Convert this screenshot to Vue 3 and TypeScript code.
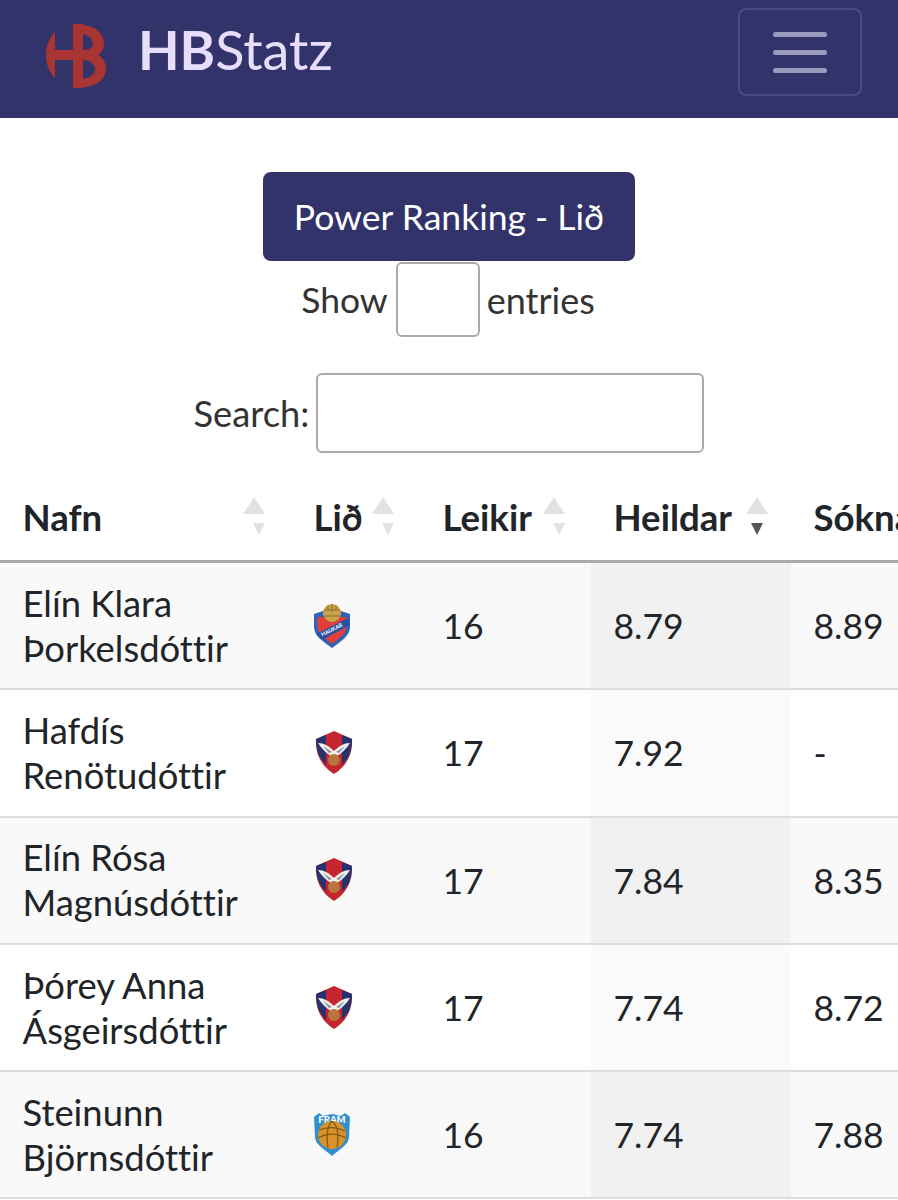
<script setup lang="ts">
type Team = 'haukar' | 'valur' | 'fram'
interface Row { first: string; last: string; team: Team; games: number; total: string; attack: string }
const columns = [
  { label: 'Nafn', key: 'nafn' },
  { label: 'Lið', key: 'lid' },
  { label: 'Leikir', key: 'leikir' },
  { label: 'Heildar', key: 'heildar', active: true },
  { label: 'Sóknarleikur', key: 'sokn', hidden: true },
]
const rows: Row[] = [
  { first: 'Elín Klara', last: 'Þorkelsdóttir', team: 'haukar', games: 16, total: '8.79', attack: '8.89' },
  { first: 'Hafdís', last: 'Renötudóttir', team: 'valur', games: 17, total: '7.92', attack: '-' },
  { first: 'Elín Rósa', last: 'Magnúsdóttir', team: 'valur', games: 17, total: '7.84', attack: '8.35' },
  { first: 'Þórey Anna', last: 'Ásgeirsdóttir', team: 'valur', games: 17, total: '7.74', attack: '8.72' },
  { first: 'Steinunn', last: 'Björnsdóttir', team: 'fram', games: 16, total: '7.74', attack: '7.88' },
]
</script>

<template>
  <div class="page">
    <header class="navbar">
      <a class="brand">
        <svg class="logo" width="60" height="64" viewBox="0 0 60 64">
          <path fill="#a83532" d="M9 8 C3 14 0 22 0 31 C0 40 3 48 9 54 L9 36 L27 36 L27 26 L9 26 Z" />
          <path fill="#a83532" d="M27 0 H37 V64 H27 Z" />
          <path fill="#a83532" d="M37 1 C50 2 58 10 58 20 C58 25 55 29 52 31 C56 33 60 38 60 45 C60 55 50 63 37 63 L37 55 C44 54 49 50 49 45 C49 40 44 36 37 36 L37 26 C42 26 47 24 47 20 C47 15 43 11 37 10 Z" />
        </svg>
        <span class="brand-text"><b>HB</b>Statz</span>
      </a>
      <button class="toggler" aria-label="Toggle navigation">
        <span></span><span></span><span></span>
      </button>
    </header>

    <main>
      <div class="actions"><button class="rank-btn">Power Ranking - Lið</button></div>
      <div class="length">
        <label class="show">Show</label>
        <span class="select"></span>
        <label>entries</label>
      </div>
      <div class="search">
        <label>Search:</label>
        <input type="text" />
      </div>

      <div class="table-wrap">
        <table>
          <colgroup>
            <col class="c1" />
            <col class="c2" />
            <col class="c3" />
            <col class="c4" />
            <col class="c5" />
          </colgroup>
          <thead>
            <tr>
              <th v-for="c in columns" :key="c.key">
                {{ c.label }}
                <span v-if="!c.hidden" class="sort" :class="'sort-' + c.key">
                  <i class="up"></i>
                  <i class="down" :class="{ dark: c.active }"></i>
                </span>
              </th>
            </tr>
          </thead>
          <tbody>
            <tr v-for="r in rows" :key="r.last">
              <td class="name">{{ r.first }}<br />{{ r.last }}</td>
              <td>
                <svg v-if="r.team === 'haukar'" class="crest" width="38" height="46" viewBox="0 0 38 46">
                  <path fill="#2f63b8" d="M1 11 L10 8 L28 8 L37 11 L37 24 C37 33 27 39 19 45 C11 39 1 33 1 24 Z" />
                  <path fill="#e23f3a" d="M4.5 14 L33.5 14 L33.5 24 C33.5 31 25 36 19 41 C13 36 4.5 31 4.5 24 Z" />
                  <path fill="#2b4fa0" d="M3 31 L35 15 L37 22 L9 37 Z" />
                  <text x="19" y="28.5" class="crest-text" transform="rotate(-27 19 27)">HAUKAR</text>
                  <circle cx="19" cy="10" r="9" fill="#c9a24a" />
                  <path d="M11 7 H27 M11 13 H27 M19 1 V9 M15 2 V7 M23 2 V7" stroke="#8b6d2a" stroke-width="1" fill="none" />
                </svg>
                <svg v-else-if="r.team === 'valur'" class="crest valur" width="38" height="44" viewBox="0 0 38 44">
                  <path fill="#c5252f" d="M19 0 L37 8 C38 22 32 35 19 43 C6 35 0 22 1 8 Z" />
                  <path fill="#26336f" d="M1 8 L11 4 L11 34 L4 25 C2 19 1 14 1 8 Z M37 8 L27 4 L27 34 L34 25 C36 19 37 14 37 8 Z" />
                  <path fill="#f1eeee" d="M3 12 C9 12 14 15 19 20 C24 15 29 12 35 12 C32 17 27 22 22 25 L16 25 C11 22 6 17 3 12 Z" />
                  <path fill="#8f8e96" d="M8 15 L17 21 L14 22 Z M30 15 L21 21 L24 22 Z" />
                  <circle cx="19" cy="29" r="6" fill="#b8743c" />
                </svg>
                <svg v-else class="crest" width="38" height="45" viewBox="0 0 38 45">
                  <path fill="#2f8fd0" d="M1 5 L6 1 L10 4 L19 2 L28 4 L32 1 L37 5 L36 25 C36 33 25 38 19 44 C13 38 2 33 2 25 Z" />
                  <text x="19" y="10.5" class="crest-name">FRAM</text>
                  <circle cx="19" cy="23" r="14" fill="#d8922b" />
                  <path d="M6 18 C14 15 24 15 32 19 M5 26 C14 21 24 21 33 26 M19 9 C14 14 13 22 15 36 M19 9 C25 14 26 22 24 36" stroke="#84560f" stroke-width="1.2" fill="none" />
                </svg>
              </td>
              <td>{{ r.games }}</td>
              <td class="sorted">{{ r.total }}</td>
              <td>{{ r.attack }}</td>
            </tr>
          </tbody>
        </table>
      </div>
    </main>
  </div>
</template>

<style>
html, body { margin: 0; background: #fff; }
</style>

<style scoped>
.page {
  width: 898px;
  height: 1200px;
  overflow: hidden;
  font-family: Lato, "Liberation Sans", sans-serif;
  font-size: 35.5px;
  font-variant-ligatures: none;
  color: #212529;
}
.navbar {
  height: 118px;
  background: #33336b;
  display: flex;
  align-items: center;
  justify-content: space-between;
  padding: 0 36px 14px 46px;
  box-sizing: border-box;
}
.brand { display: flex; align-items: center; gap: 32px; }
.logo { margin-top: 8px; }
.brand-text { font-size: 54px; color: #e8defc; line-height: 1; margin-bottom: 4px; }
.brand-text b { font-weight: 700; }
.toggler {
  width: 124px;
  height: 88px;
  background: transparent;
  border: 2px solid #4b4b81;
  border-radius: 8px;
  display: flex;
  flex-direction: column;
  align-items: center;
  justify-content: center;
  gap: 13px;
  padding: 0;
}
.toggler span { width: 54px; height: 5px; border-radius: 3px; background: #9a9abf; }
.actions { display: flex; justify-content: center; padding-top: 54px; }
.rank-btn {
  width: 372px;
  height: 89px;
  background: #33336b;
  color: #fff;
  border: 0;
  border-radius: 8px;
  font: inherit;
  font-variant-ligatures: none;
  padding: 0;
}
.length {
  display: flex;
  justify-content: center;
  align-items: center;
  height: 75px;
  margin-top: 1px;
  padding-right: 2px;
  color: #333;
  font-size: 36px;
}
.show { font-size: 35.5px; margin-right: 8px; }
.select {
  box-sizing: border-box;
  width: 84px;
  height: 75px;
  margin-right: 7px;
  border: 2px solid #aaa;
  border-radius: 6px;
  background: #fff;
}
.search {
  display: flex;
  justify-content: center;
  align-items: center;
  gap: 7px;
  margin-top: 36px;
  color: #333;
  font-size: 36.3px;
}
.search input {
  box-sizing: border-box;
  width: 388px;
  height: 80px;
  border: 2px solid #aaa;
  border-radius: 6px;
  background: #fff;
  outline: none;
}
.table-wrap { overflow: hidden; margin-top: 21px; }
table {
  width: 1091px;
  table-layout: fixed;
  border-collapse: separate;
  border-spacing: 0;
}
.c1 { width: 291px; }
.c2 { width: 129px; }
.c3 { width: 171px; }
.c4 { width: 200px; }
.c5 { width: 300px; }
th {
  position: relative;
  height: 89px;
  padding: 0 0 0 22.5px;
  text-align: left;
  font-weight: 700;
  font-size: 36.6px;
  white-space: nowrap;
  border-bottom: 3px solid #aaa;
  box-sizing: border-box;
}
td {
  box-sizing: border-box;
  height: 127.3px;
  padding: 0 0 0 22.5px;
  line-height: 45px;
  border-bottom: 2px solid #ddd;
}
td.name { font-size: 36.4px; }
tbody tr:nth-child(odd) td { background: #f9f9f9; }
tbody tr:nth-child(odd) td.sorted { background: #f1f1f1; }
tbody tr:nth-child(even) td.sorted { background: #fafafa; }
.crest { display: block; margin-left: -1px; }
.crest.valur { margin-left: 1px; }
.crest-text { font: 700 5.5px Lato, sans-serif; fill: #fff; text-anchor: middle; }
.crest-name { font: 900 9.5px Lato, sans-serif; fill: #fff; text-anchor: middle; }
.sort { position: absolute; top: 0; left: 0; width: 100%; height: 100%; }
.sort i { position: absolute; width: 0; height: 0; border-style: solid; border-color: transparent; }
.up { border-width: 0 11.5px 17px; border-bottom-color: #e2e2e2 !important; top: 23px; }
.down { border-width: 12px 6px 0; border-top-color: #e2e2e2 !important; top: 49px; }
.down.dark { border-top-color: #555 !important; }
.sort-nafn .up { left: 243px; }
.sort-nafn .down { left: 253px; }
.sort-lid .up { left: 81px; }
.sort-lid .down { left: 91px; }
.sort-leikir .up { left: 123px; }
.sort-leikir .down { left: 133px; }
.sort-heildar .up { left: 155px; }
.sort-heildar .down { left: 160px; }
</style>
